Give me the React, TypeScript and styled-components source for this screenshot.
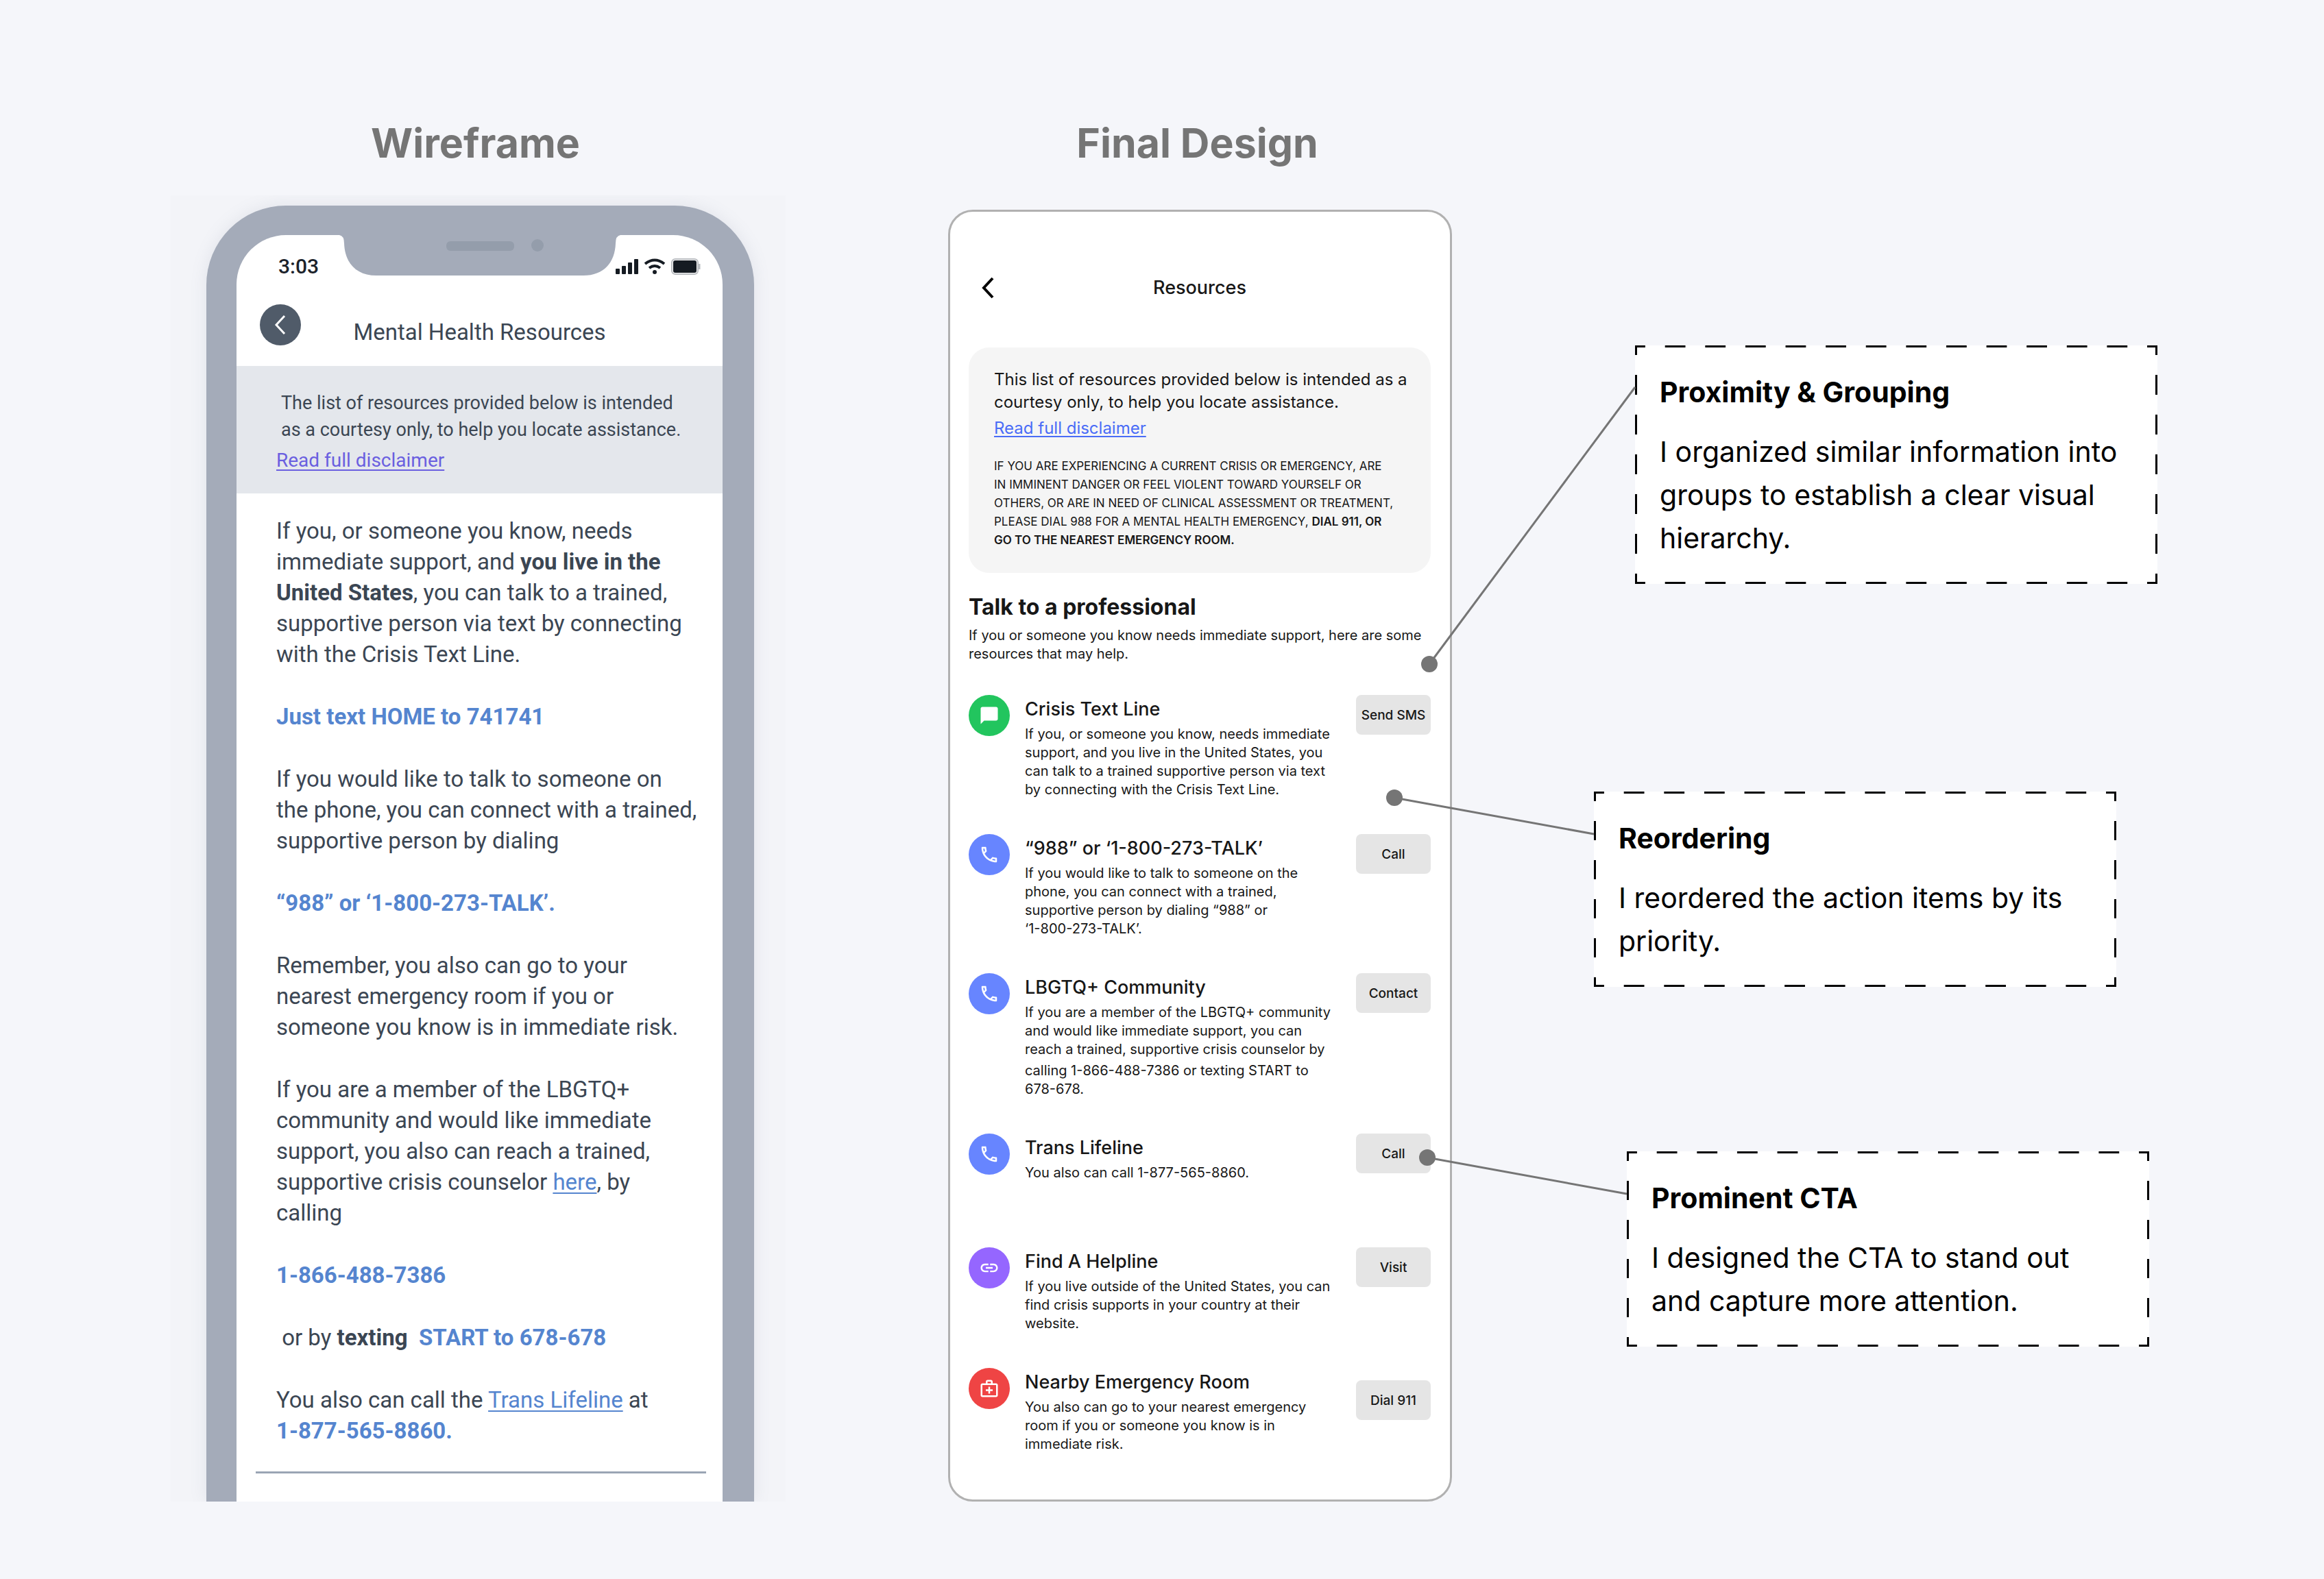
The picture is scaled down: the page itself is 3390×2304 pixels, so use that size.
import React from "react";
import styled, { createGlobalStyle } from "styled-components";
import {
  MdChatBubble,
  MdLink,
  MdOutlineCall,
  MdOutlineMedicalServices,
} from "react-icons/md";

const GlobalStyle = createGlobalStyle`
  *, *::before, *::after { box-sizing: border-box; }
  body { margin: 0; background: #f5f6fa; }
  h1, h2, h3, p, ul { margin: 0; padding: 0; }
  button { font: inherit; color: inherit; border: 0; padding: 0; cursor: pointer; }
`;

const Page = styled.main`
  display: grid;
  grid-template-columns: minmax(0, 927fr) minmax(0, 735fr) minmax(0, 822fr);
  column-gap: 207px;
  align-items: start;
  min-height: 100vh;
  padding: 173px 243px 114px 249px;
  background: #f5f6fa;
  color: #000;
  font-family: Inter, "Liberation Sans", sans-serif;
`;

const Column = styled.section<{ $gap: number; $end?: number }>`
  display: flex;
  flex-direction: column;
  gap: ${(p) => p.$gap}px;
  padding-right: ${(p) => p.$end ?? 0}px;
`;

const ColumnTitle = styled.h1`
  padding-right: 8px;
  font-size: 59px;
  line-height: 72px;
  font-weight: 700;
  color: #757575;
  text-align: center;
`;

/* ---------- Wireframe ---------- */

const Backdrop = styled.div`
  overflow: hidden;
  padding: 15px 46px 0 52px;
  background: #f3f4f8;
`;

const Device = styled.div`
  padding: 43px 46px 0 44px;
  border-radius: 116px 116px 0 0;
  background: #a4abb9;
  box-shadow: 0 0 24px rgba(120, 130, 150, 0.14);
`;

const Screen = styled.div`
  position: relative;
  border-radius: 72px 72px 0 0;
  background: #fff;
  color: #3b4653;
  font-family: Roboto, "Liberation Sans", sans-serif;
  font-size: 33px;
  line-height: 45px;
`;

const Notch = styled.svg`
  position: absolute;
  top: 0;
  left: 50%;
  width: 410px;
  height: 60px;
  margin-left: -205px;
`;

const StatusBar = styled.div`
  display: flex;
  justify-content: space-between;
  height: 101px;
  padding: 25px 32px 0 61px;
  color: #1c232b;
  font-size: 30px;
  line-height: 42px;
  font-weight: 500;
`;

const StatusIcons = styled.svg`
  width: 124px;
  height: 28px;
  margin-top: 6px;
`;

const WireNav = styled.header`
  display: grid;
  grid-template-columns: 60px 1fr 60px;
  height: 90px;
  padding: 0 34px;
`;

const RoundBack = styled.button`
  display: flex;
  align-items: center;
  justify-content: center;
  width: 60px;
  height: 60px;
  border-radius: 50%;
  background: #505b69;
`;

const WireTitle = styled.h2`
  padding-top: 21px;
  font-size: 33px;
  line-height: 40px;
  font-weight: 400;
  text-align: center;
  white-space: nowrap;
`;

const WireNotice = styled.div`
  padding: 35px 0 26px 58px;
  background: #e4e7ec;
`;

const WireNoticeText = styled.p`
  padding-left: 7px;
  margin-bottom: 2px;
  font-size: 27px;
  line-height: 39px;
  white-space: nowrap;
`;

const WireNoticeLink = styled.a`
  display: block;
  font-size: 28px;
  line-height: 45px;
  color: #6a5fe0;
  text-decoration: underline;
  text-decoration-thickness: 2px;
  text-underline-offset: 4px;
`;

const WireBody = styled.div`
  display: flex;
  flex-direction: column;
  gap: 46px;
  padding: 32px 0 0 58px;
  white-space: nowrap;
`;

const Accent = styled.strong`
  font-weight: 700;
  color: #5585cf;
`;

const WireLink = styled.a`
  color: #5585cf;
  text-decoration: underline;
  text-decoration-thickness: 2px;
  text-underline-offset: 4px;
`;

const WireRule = styled.hr`
  height: 3px;
  margin: 37px 24px 0 28px;
  border: 0;
  background: #9aa5b4;
`;

const WireFoot = styled.div`
  height: 41px;
`;

/* ---------- Final design ---------- */

const Card = styled.article`
  padding: 91px 28px 67px 27px;
  border: 3px solid #b1b1b1;
  border-radius: 36px;
  background: #fff;
  color: #171717;
  white-space: nowrap;
`;

const Nav = styled.header`
  display: grid;
  grid-template-columns: 56px 1fr 56px;
  align-items: center;
  margin-bottom: 67px;
`;

const BackButton = styled.button`
  display: flex;
  justify-content: center;
  background: none;
`;

const NavTitle = styled.h2`
  font-size: 27px;
  line-height: 40px;
  font-weight: 500;
  text-align: center;
`;

const Disclaimer = styled.div`
  margin-bottom: 30px;
  padding: 30px 37px 34px;
  border-radius: 30px;
  background: #f5f5f5;
`;

const Lead = styled.p`
  font-size: 24px;
  line-height: 33px;
`;

const DisclaimerLink = styled.a`
  display: block;
  margin: 5px 0 26px;
  font-size: 24px;
  line-height: 33px;
  color: #4a6cf7;
  text-decoration: underline;
  text-decoration-thickness: 2px;
  text-underline-offset: 3px;
`;

const Small = styled.p<{ $caps?: boolean }>`
  font-size: ${(p) => (p.$caps ? 17 : 20)}px;
  line-height: 27px;

  & + & {
    margin-top: 4px;
  }

  strong {
    font-weight: 600;
  }
`;

const SectionTitle = styled.h2`
  margin-bottom: 8px;
  font-size: 32px;
  line-height: 40px;
  font-weight: 700;
`;

const List = styled.ul`
  display: flex;
  flex-direction: column;
  gap: 51px;
  margin-top: 46px;
  list-style: none;
`;

const Item = styled.li`
  display: grid;
  grid-template-columns: 60px 1fr 109px;
  column-gap: 22px;
  align-items: start;
  min-height: 115px;
`;

const Badge = styled.span<{ $color: string }>`
  display: flex;
  align-items: center;
  justify-content: center;
  width: 60px;
  height: 60px;
  border-radius: 50%;
  background: ${(p) => p.$color};
  color: #fff;
  font-size: 30px;
`;

const ItemTitle = styled.h3`
  margin-bottom: 2px;
  font-size: 27px;
  line-height: 42px;
  font-weight: 500;
`;

const Action = styled.button<{ $drop?: boolean }>`
  width: 100%;
  height: 58px;
  margin-top: ${(p) => (p.$drop ? 18 : 0)}px;
  border-radius: 8px;
  background: #e5e5e5;
  font-size: 19px;
  font-weight: 500;
`;

/* ---------- Annotations ---------- */

const Notes = styled.aside`
  display: flex;
  flex-direction: column;
  padding-top: 331px;
`;

const Note = styled.section<{ $indent: number; $space: number }>`
  position: relative;
  width: 762px;
  max-width: 100%;
  margin: ${(p) => p.$space}px 0 0 ${(p) => p.$indent}px;
  padding: 37px 36px 35px;
  background-color: #fff;
  background-image:
    linear-gradient(90deg, #000 25%, transparent 25% 75%, #000 75%),
    linear-gradient(90deg, #000 25%, transparent 25% 75%, #000 75%),
    linear-gradient(#000 25%, transparent 25% 75%, #000 75%),
    linear-gradient(#000 25%, transparent 25% 75%, #000 75%);
  background-size: 58px 3px, 58px 3px, 3px 58px, 3px 58px;
  background-position: 0 0, 0 100%, 0 0, 100% 0;
  background-repeat: round no-repeat, round no-repeat, no-repeat round, no-repeat round;
`;

const NoteTitle = styled.h2`
  margin-bottom: 24px;
  font-size: 41px;
  line-height: 63px;
  font-weight: 700;
`;

const NoteText = styled.p`
  font-size: 41px;
  line-height: 63px;
  white-space: nowrap;
`;

const Connector = styled.svg`
  position: absolute;
  right: 100%;
  overflow: visible;
  pointer-events: none;
`;

type Pointer = { dx: number; dy: number; from: number };

/* Line running from the note's left edge to a dot on the design. */
function Leader({ dx, dy, from }: Pointer) {
  return (
    <Connector width={dx} height={1} style={{ top: from }} aria-hidden="true">
      <line x1={dx} y1={0} x2={0} y2={dy} stroke="#757575" strokeWidth={3} />
      <circle cx={0} cy={dy} r={12} fill="#757575" />
    </Connector>
  );
}

const resources = [
  {
    icon: <MdChatBubble />,
    color: "#22c55e",
    title: "Crisis Text Line",
    text: [
      [
        "If you, or someone you know, needs immediate",
        "support, and you live in the United States, you",
        "can talk to a trained supportive person via text",
        "by connecting with the Crisis Text Line.",
      ],
    ],
    action: "Send SMS",
  },
  {
    icon: <MdOutlineCall />,
    color: "#6785ff",
    title: "“988” or ‘1-800-273-TALK’",
    text: [
      [
        "If you would like to talk to someone on the",
        "phone, you can connect with a trained,",
        "supportive person by dialing “988” or",
        "‘1-800-273-TALK’.",
      ],
    ],
    action: "Call",
  },
  {
    icon: <MdOutlineCall />,
    color: "#6785ff",
    title: "LBGTQ+ Community",
    text: [
      [
        "If you are a member of the LBGTQ+ community",
        "and would like immediate support, you can",
        "reach a trained, supportive crisis counselor by",
      ],
      ["calling 1-866-488-7386 or texting START to", "678-678."],
    ],
    action: "Contact",
  },
  {
    icon: <MdOutlineCall />,
    color: "#6785ff",
    title: "Trans Lifeline",
    text: [["You also can call 1-877-565-8860."]],
    action: "Call",
  },
  {
    icon: <MdLink />,
    color: "#9566ff",
    title: "Find A Helpline",
    text: [
      [
        "If you live outside of the United States, you can",
        "find crisis supports in your country at their",
        "website.",
      ],
    ],
    action: "Visit",
  },
  {
    icon: <MdOutlineMedicalServices />,
    color: "#ef4444",
    title: "Nearby Emergency Room",
    text: [
      [
        "You also can go to your nearest emergency",
        "room if you or someone you know is in",
        "immediate risk.",
      ],
    ],
    action: "Dial 911",
    drop: true,
  },
];

const notes = [
  {
    title: "Proximity & Grouping",
    lines: ["I organized similar information into", "groups to establish a clear visual", "hierarchy."],
    indent: 60,
    space: 0,
    pointer: { dx: 300, dy: 404, from: 61 },
  },
  {
    title: "Reordering",
    lines: ["I reordered the action items by its", "priority."],
    indent: 0,
    space: 303,
    pointer: { dx: 291, dy: -53, from: 62 },
  },
  {
    title: "Prominent CTA",
    lines: ["I designed the CTA to stand out", "and capture more attention."],
    indent: 48,
    space: 240,
    pointer: { dx: 291, dy: -53, from: 62 },
  },
];

function Lines({ of }: { of: string[] }) {
  return (
    <>
      {of.map((line, i) => (
        <React.Fragment key={line}>
          {i > 0 && <br />}
          {line}
        </React.Fragment>
      ))}
    </>
  );
}

function Wireframe() {
  return (
    <Backdrop>
      <Device>
        <Screen>
          <Notch viewBox="0 0 410 60" aria-hidden="true">
            <path
              d="M0 0H410Q403 1 403 12C402 40 386 59 356 59H54C24 59 8 40 7 12Q7 1 0 0Z"
              fill="#a4abb9"
            />
            <rect x="156" y="9" width="99" height="14" rx="6" fill="#949dab" />
            <circle cx="289" cy="15" r="9" fill="#949dab" />
          </Notch>
          <StatusBar>
            <span>3:03</span>
            <StatusIcons viewBox="0 0 124 28" aria-hidden="true">
              <g fill="#151b22">
                <rect x="0" y="18" width="6" height="8" rx="1" />
                <rect x="9" y="14" width="6" height="12" rx="1" />
                <rect x="18" y="9" width="6" height="17" rx="1" />
                <rect x="27" y="4" width="6" height="22" rx="1" />
                <circle cx="57" cy="23" r="3" />
                <rect x="84" y="6" width="34" height="18" rx="3" />
              </g>
              <g fill="none" stroke="#151b22" strokeWidth="4">
                <path d="M43 11Q57 0 71 11" />
                <path d="M49 17Q57 11 65 17" />
              </g>
              <rect x="82" y="4" width="38" height="22" rx="5" fill="none" stroke="#b9bcc0" strokeWidth="2" />
              <path d="M122 11v8" stroke="#b9bcc0" strokeWidth="3" />
            </StatusIcons>
          </StatusBar>
          <WireNav>
            <RoundBack aria-label="Back">
              <svg width="18" height="30" viewBox="0 0 18 30" fill="none" stroke="#fff" strokeWidth="3">
                <path d="M15 2L3 15L15 28" />
              </svg>
            </RoundBack>
            <WireTitle>Mental Health Resources</WireTitle>
          </WireNav>
          <WireNotice>
            <WireNoticeText>
              The list of resources provided below is intended
              <br />
              as a courtesy only, to help you locate assistance.
            </WireNoticeText>
            <WireNoticeLink href="#disclaimer">Read full disclaimer</WireNoticeLink>
          </WireNotice>
          <WireBody>
            <p>
              If you, or someone you know, needs
              <br />
              immediate support, and <strong>you live in the</strong>
              <br />
              <strong>United States</strong>, you can talk to a trained,
              <br />
              supportive person via text by connecting
              <br />
              with the Crisis Text Line.
            </p>
            <p>
              <Accent>Just text HOME to 741741</Accent>
            </p>
            <p>
              If you would like to talk to someone on
              <br />
              the phone, you can connect with a trained,
              <br />
              supportive person by dialing
            </p>
            <p>
              <Accent>“988” or ‘1-800-273-TALK’.</Accent>
            </p>
            <p>
              Remember, you also can go to your
              <br />
              nearest emergency room if you or
              <br />
              someone you know is in immediate risk.
            </p>
            <p>
              If you are a member of the LBGTQ+
              <br />
              community and would like immediate
              <br />
              support, you also can reach a trained,
              <br />
              supportive crisis counselor <WireLink href="#counselor">here</WireLink>, by
              <br />
              calling
            </p>
            <p>
              <Accent>1-866-488-7386</Accent>
            </p>
            <p>
              &nbsp;or by <strong>texting</strong>&nbsp; <Accent>START to 678-678</Accent>
            </p>
            <p>
              You also can call the <WireLink href="#trans-lifeline">Trans Lifeline</WireLink> at
              <br />
              <Accent>1-877-565-8860.</Accent>
            </p>
          </WireBody>
          <WireRule />
          <WireFoot />
        </Screen>
      </Device>
    </Backdrop>
  );
}

function FinalDesign() {
  return (
    <Card>
      <Nav>
        <BackButton aria-label="Back">
          <svg width="20" height="32" viewBox="0 0 20 32" fill="none" stroke="#000" strokeWidth="4">
            <path d="M17 2L4 16L17 30" />
          </svg>
        </BackButton>
        <NavTitle>Resources</NavTitle>
      </Nav>
      <Disclaimer>
        <Lead>
          This list of resources provided below is intended as a
          <br />
          courtesy only, to help you locate assistance.
        </Lead>
        <DisclaimerLink href="#disclaimer">Read full disclaimer</DisclaimerLink>
        <Small $caps>
          IF YOU ARE EXPERIENCING A CURRENT CRISIS OR EMERGENCY, ARE
          <br />
          IN IMMINENT DANGER OR FEEL VIOLENT TOWARD YOURSELF OR
          <br />
          OTHERS, OR ARE IN NEED OF CLINICAL ASSESSMENT OR TREATMENT,
          <br />
          PLEASE DIAL 988 FOR A MENTAL HEALTH EMERGENCY, <strong>DIAL 911, OR</strong>
          <br />
          <strong>GO TO THE NEAREST EMERGENCY ROOM.</strong>
        </Small>
      </Disclaimer>
      <SectionTitle>Talk to a professional</SectionTitle>
      <Small>
        If you or someone you know needs immediate support, here are some
        <br />
        resources that may help.
      </Small>
      <List>
        {resources.map((r) => (
          <Item key={r.title}>
            <Badge $color={r.color}>{r.icon}</Badge>
            <div>
              <ItemTitle>{r.title}</ItemTitle>
              {r.text.map((lines) => (
                <Small key={lines[0]}>
                  <Lines of={lines} />
                </Small>
              ))}
            </div>
            <Action $drop={r.drop}>{r.action}</Action>
          </Item>
        ))}
      </List>
    </Card>
  );
}

export default function App() {
  return (
    <>
      <GlobalStyle />
      <Page>
        <Column $gap={40} $end={30}>
          <ColumnTitle>Wireframe</ColumnTitle>
          <Wireframe />
        </Column>
        <Column $gap={61}>
          <ColumnTitle>Final Design</ColumnTitle>
          <FinalDesign />
        </Column>
        <Notes>
          {notes.map((n) => (
            <Note key={n.title} $indent={n.indent} $space={n.space}>
              <Leader {...n.pointer} />
              <NoteTitle>{n.title}</NoteTitle>
              <NoteText>
                <Lines of={n.lines} />
              </NoteText>
            </Note>
          ))}
        </Notes>
      </Page>
    </>
  );
}
